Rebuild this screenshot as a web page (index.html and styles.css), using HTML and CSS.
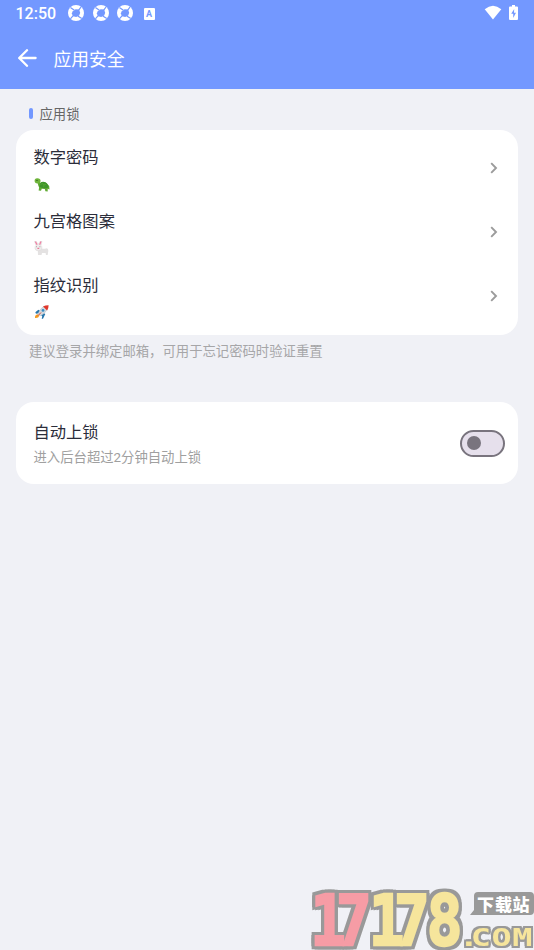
FILE: index.html
```html
<!DOCTYPE html>
<html lang="zh-CN">
<head>
<meta charset="utf-8">
<title>应用安全</title>
<link rel="stylesheet" href="styles.css">
</head>
<body>
<svg width="0" height="0" class="defs">
  <defs>
    <g id="aperture">
      <circle cx="8" cy="8" r="8" fill="#fff"/>
      <path d="M4.6 6.4 7.6 4.2 11 4.6 12.2 7.8 11.2 10.6 8.2 12 5 11.2 3.8 8.4Z" fill="#7398ff"/>
      <path d="M6.4 5.2 2.4 2.4M10.6 5.4 13 2M9.8 11 13.8 13.6M5.2 10.6 2.4 13.8" stroke="#7398ff" stroke-width="1.2"/>
    </g>
    <path id="chevron" d="M1.2 1.2 6 6 1.2 10.8" fill="none" stroke="#9b9b9b" stroke-width="1.9"/>
  </defs>
</svg>
<header class="top">
  <div class="status">
    <span class="clock">12:50</span>
    <svg class="ap" viewBox="0 0 16 16"><use href="#aperture"/></svg>
    <svg class="ap" viewBox="0 0 16 16"><use href="#aperture"/></svg>
    <svg class="ap" viewBox="0 0 16 16"><use href="#aperture"/></svg>
    <span class="badge">A</span>
    <svg class="wifi" viewBox="0 0 18 15"><path d="M.7 4.2Q9-2.8 17.3 4.2L9 14.6Z" fill="#fff"/></svg>
    <svg class="battery" viewBox="0 0 9 15"><path d="M3 0h3v1.5h2Q9 1.5 9 2.5v11.3q0 1.2-1 1.2H1q-1 0-1-1.2V2.5q0-1 1-1h2z" fill="#fff"/><path d="M5.2 4 2.2 8.8h2V13l2.8-5.2H5z" fill="#7398ff"/></svg>
  </div>
  <div class="bar">
    <svg class="back" viewBox="0 0 20 18"><path d="M18.6 9H2.4M10 1.2 2.2 9l7.8 7.8" fill="none" stroke="#fff" stroke-width="2.3" stroke-linecap="round" stroke-linejoin="round"/></svg>
    <h1>应用安全</h1>
  </div>
</header>
<main>
  <h2 class="section"><i></i>应用锁</h2>
  <section class="card locks">
    <div class="row">
      <div>
        <h3>数字密码</h3>
        <svg class="emoji" viewBox="0 0 16 14">
          <path d="M3.6 4.5q.3 3 1.5 5l-.5 3 2.4.2.8-2 3 .3.6 2.3 2.3.1v-2.6l1.8.7-.3-3.5L12.4 5Q9 2.8 6.4 5L5.8 3z" fill="#62ab34"/>
          <path d="M5.4 9Q5.5 3.7 9.2 3.7q4.9.3 5.4 5.9-3.8 1.6-9.2-.6z" fill="#3f942b"/>
          <path d="M.7 3.8Q0 .5 3.2.3q3.3-.1 3.4 2.5-.2 2.6-3.4 2.6Q1.1 5.4.7 3.8z" fill="#70b63c"/>
          <path d="M6.5 7 8.2 5.3 9.9 7 12 6.3M9.8 7.1v2.2" fill="none" stroke="#5caf32" stroke-width=".7"/>
          <circle cx="3" cy="2.4" r=".6" fill="#24541a"/>
        </svg>
      </div>
      <svg class="chev" viewBox="0 0 8 12"><use href="#chevron"/></svg>
    </div>
    <div class="row">
      <div>
        <h3>九宫格图案</h3>
        <svg class="emoji raised" viewBox="0 0 16 14">
          <path d="M7 7.6q3 .4 5.8-.4 1.6.5 1.5 2.8l-.6 4H12l-.4-2H8l-.5 2.1H4L3.8 9z" fill="#e4e2e2"/>
          <path d="M2 4.4.4.3 2 0l2.2 3.2L6.4 0 8 .3l-1 4.1q1.1 1.2.9 2.8Q7.4 9.8 4.3 9.8T.9 7.2Q.8 5.6 2 4.4z" fill="#eeecec" stroke="#d4d0d0" stroke-width=".4"/>
          <path d="M1.4.6 3.1 3.8M7 .6 5.6 3.8" stroke="#f080a4" stroke-width="1.2"/>
          <path d="M3.4 7.4h1.8" stroke="#e87999" stroke-width="1.2"/>
          <path d="M2.2 5.7h.8M5.5 5.7h.8" stroke="#8f8585" stroke-width=".8"/>
        </svg>
      </div>
      <svg class="chev" viewBox="0 0 8 12"><use href="#chevron"/></svg>
    </div>
    <div class="row">
      <div>
        <h3>指纹识别</h3>
        <svg class="emoji raised" viewBox="0 0 16 14">
          <path d="M4.4 4.8 1.3 7.2 2 8.7l3.2-.4 3 2.9-.5 2.5 1.3.1L11.3 9z" fill="#2877ad"/>
          <path d="M3.6 9.3Q.7 9.8 1 13q3.6.4 4.2-2.2z" fill="#f49b21"/>
          <path d="M3.9 9Q6 3.3 10.2 1.2l3.1 3.1Q11.2 8.7 5.8 11z" fill="#d4dbe0" stroke="#a8b4bd" stroke-width=".4"/>
          <path d="M9 1.6Q11.6.1 14.6.2q.1 2.8-1.5 5.2z" fill="#df382d"/>
          <circle cx="9" cy="5.4" r="1.4" fill="#3b8ec3"/>
          <path d="M4.2 10.5 7 7.5" stroke="#d94532" stroke-width="1"/>
        </svg>
      </div>
      <svg class="chev" viewBox="0 0 8 12"><use href="#chevron"/></svg>
    </div>
  </section>
  <p class="note">建议登录并绑定邮箱，可用于忘记密码时验证重置</p>
  <section class="card auto">
    <div>
      <h3>自动上锁</h3>
      <p>进入后台超过2分钟自动上锁</p>
    </div>
    <span class="switch"><i></i></span>
  </section>
</main>
<svg class="mark" viewBox="0 0 226 64">
  <g class="outline">
    <text class="digits" transform="translate(0 58.5) scale(.86 1)" x="2.5 32.5 70.5 100 138"><tspan class="red">17</tspan><tspan class="yellow">178</tspan></text>
  </g>
  <path d="M170 6h52q4 0 4 4v15q0 4-4 4h-60l4-5V10q0-4 4-4z" fill="#999"/>
  <text class="site" x="169 187 204.5" y="25">下载站</text>
  <g class="outline small">
    <text class="com" transform="translate(0 60) scale(1.34 1)" x="112.5 121.5 137 152.5">.COM</text>
  </g>
</svg>
</body>
</html>
```

FILE: styles.css
```css
* { box-sizing: border-box; }
body {
  margin: 0;
  width: 534px;
  height: 950px;
  overflow: hidden;
  position: relative;
  background: #f0f1f6;
  font-family: Roboto, "Noto Sans CJK SC", sans-serif;
}
h1, h2, h3, p { margin: 0; font-weight: 400; }
svg { display: block; flex: none; }
.defs { position: absolute; }
.top { height: 89px; background: #7398ff; color: #fff; }
.status { height: 28px; display: flex; align-items: center; padding: 0 16px 2px 15px; }
.clock { width: 53px; font-size: 16px; font-weight: 500; line-height: 24px; padding-top: 2px; padding-left: .5px; }
.ap { width: 16px; height: 16px; margin-right: 8.5px; }
.badge {
  width: 11px; height: 12px; margin-left: 2px; margin-top: 1px; border-radius: 1px;
  background: #fff; color: #7398ff; font-size: 9px; font-weight: 700; line-height: 12px; text-align: center;
}
.wifi { width: 18px; height: 15px; margin-left: auto; margin-top: -1px; }
.battery { width: 9px; height: 15px; margin-left: 7px; margin-top: -1px; }
.bar { height: 61px; display: flex; align-items: center; padding-left: 17px; }
.back { width: 20px; height: 18px; margin-right: 16.5px; margin-top: -1px; }
h1 { font-size: 17.8px; line-height: 26px; padding-top: 2px; }
main { padding: 14px 16px 0; }
.section { display: flex; align-items: center; height: 20px; padding-left: 13px; font-size: 13.35px; color: #666; }
.section i { width: 4px; height: 11px; border-radius: 2px; background: #7398ff; margin-right: 6.5px; }
.card { background: #fff; border-radius: 18px; }
.locks { margin-top: 7px; height: 205px; padding-top: 6px; }
.row { height: 64px; display: flex; align-items: center; justify-content: space-between; padding: 0 20px 0 17.5px; }
h3 { font-size: 16.3px; line-height: 24px; color: #2b2d3a; }
.row h3 { padding-top: 1px; }
.emoji { width: 16px; height: 14px; margin-top: 8px; }
.raised { margin-top: 7px; margin-bottom: 1px; }
.chev { width: 8px; height: 12px; }
.note { height: 20px; margin-top: 7px; padding-left: 13px; font-size: 13.35px; line-height: 20px; color: #a6a6a8; }
.auto { margin-top: 40px; height: 82px; padding: 0 13px 0 17.5px; display: flex; justify-content: space-between; align-items: center; }
.auto h3 { padding-top: 3px; }
.auto p { font-size: 13.35px; line-height: 20px; margin-top: 3px; color: #a0a0a0; }
.switch { width: 45px; height: 27px; border: 2px solid #79747e; border-radius: 14px; background: #e6e0ec; display: flex; align-items: center; padding-left: 5px; }
.switch i { width: 14px; height: 14px; border-radius: 50%; background: #79747e; }
.mark { position: absolute; left: 308px; top: 886px; width: 226px; height: 64px; overflow: visible; }
.outline { filter: drop-shadow(3px 0 0 #999) drop-shadow(-3px 0 0 #999) drop-shadow(0 3px 0 #999) drop-shadow(0 -3px 0 #999); }
.outline.small { filter: drop-shadow(2px 0 0 #999) drop-shadow(-2px 0 0 #999) drop-shadow(0 2px 0 #999) drop-shadow(0 -2px 0 #999); }
.digits { font: 700 69px "DejaVu Sans Mono", monospace; stroke-width: 2.4px; }
.red { fill: #f69ca5; stroke: #f69ca5; }
.yellow { fill: #f6e59c; stroke: #f6e59c; }
.site { font: 900 17px "Noto Sans CJK SC", sans-serif; fill: #fff; }
.com { font: 700 25px "DejaVu Sans Mono", monospace; fill: #f6e59c; }
```
